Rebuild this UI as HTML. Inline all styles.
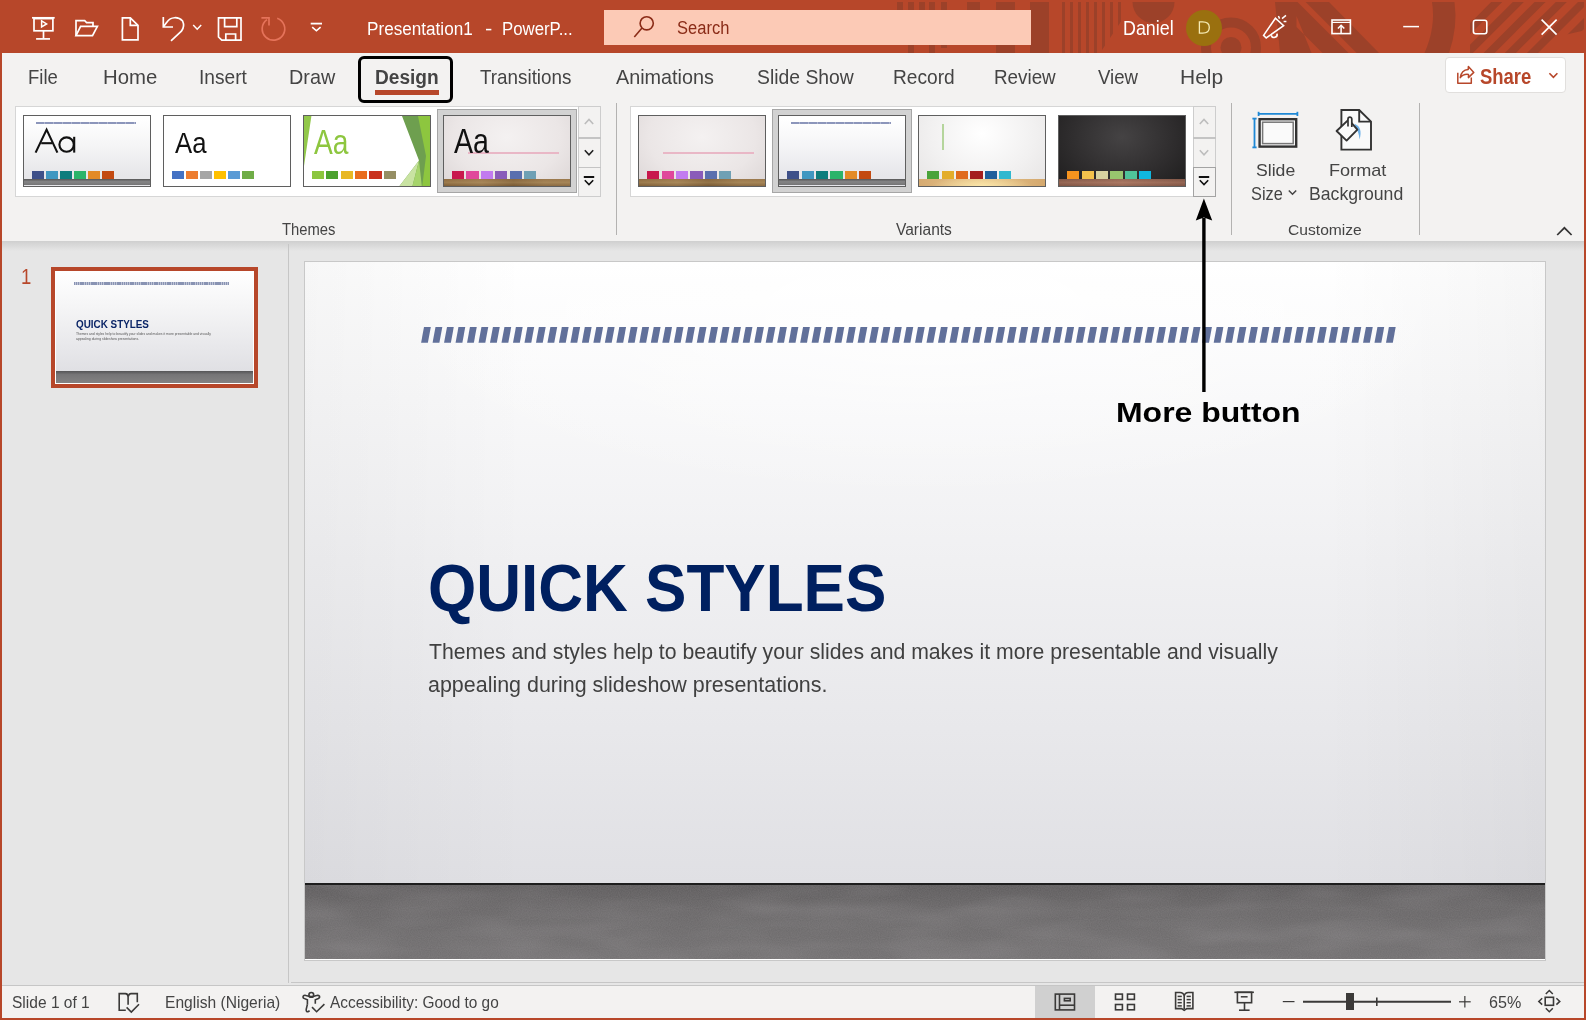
<!DOCTYPE html><html><head><meta charset="utf-8"><style>
*{margin:0;padding:0;box-sizing:border-box}
html,body{width:1586px;height:1020px;overflow:hidden;background:#B7472A;font-family:"Liberation Sans",sans-serif;position:relative}
.a{position:absolute}
.t{position:absolute;white-space:nowrap;transform-origin:0 0}
svg{position:absolute;overflow:visible}
</style></head><body>
<svg class="a" style="left:0;top:0" width="1586" height="53" viewBox="0 0 1586 53">
<defs><clipPath id="tbc"><rect x="0" y="2" width="1584" height="51"/></clipPath></defs><g clip-path="url(#tbc)" fill="#9C4129">
<rect x="897" y="2" width="6" height="8"/>
<rect x="908" y="2" width="6" height="8"/>
<rect x="908" y="45" width="6" height="8"/>
<rect x="919" y="2" width="6" height="8"/>
<rect x="929" y="2" width="6" height="8"/>
<rect x="929" y="45" width="6" height="8"/>
<rect x="941" y="2" width="6" height="8"/>
<rect x="941" y="45" width="6" height="3"/>
<rect x="967" y="2" width="13" height="8"/>
<rect x="996" y="2" width="19" height="8"/>
<rect x="996" y="45" width="19" height="8"/>
<rect x="1030" y="2" width="19" height="51"/>
<clipPath id="thin"><polygon points="1055,2 1122,2 1122,20 1100,53 1055,53"/></clipPath><g clip-path="url(#thin)">
<rect x="1062" y="2" width="3" height="51"/>
<rect x="1070" y="2" width="3" height="51"/>
<rect x="1078" y="2" width="3" height="51"/>
<rect x="1086" y="2" width="3" height="51"/>
<rect x="1094" y="2" width="3" height="51"/>
<rect x="1102" y="2" width="3" height="51"/>
<rect x="1110" y="2" width="3" height="51"/>
<rect x="1118" y="2" width="3" height="51"/>
</g>
<circle cx="1153.5" cy="2" r="21"/>
<circle cx="1231" cy="47.5" r="25" fill="none" stroke="#9C4129" stroke-width="10"/>
<circle cx="1231" cy="47.5" r="10.5"/>
<polygon points="1275,2 1329,2 1379,53 1280,53"/>
<g fill="#B7472A"><polygon points="1297.5,2 1305.6,2 1356.6,53 1348.5,53"/><polygon points="1296.5,16 1296.5,27 1322.5,53 1311.5,53"/></g>
<path d="M1432,2 L1454.5,2 Q1458,27 1449,53 L1424.5,53 Q1436,27 1432,2 Z"/>
<clipPath id="rs"><polygon points="1470,2 1586,2 1586,30 1560,36 1545,53 1470,53"/></clipPath><g clip-path="url(#rs)">
<polygon points="1491.2,2 1502.2,2 1451.2,53 1440.2,53"/>
<polygon points="1512.8,2 1523.8,2 1472.8,53 1461.8,53"/>
<polygon points="1534.6,2 1545.6,2 1494.6,53 1483.6,53"/>
<polygon points="1555.8,2 1566.8,2 1515.8,53 1504.8,53"/>
<polygon points="1578.0,2 1589.0,2 1538.0,53 1527.0,53"/>
<polygon points="1600.0,2 1611.0,2 1560.0,53 1549.0,53"/>
</g>
</g></svg>
<div class="a" style="left:604px;top:10px;width:427px;height:35px;background:#FCCAB6"></div>
<svg style="left:0;top:0" width="1586" height="53"><circle cx="646.7" cy="23.3" r="6.6" fill="none" stroke="#8A2B17" stroke-width="1.6"/><line x1="642" y1="28" x2="634.3" y2="36.9" stroke="#8A2B17" stroke-width="1.6"/></svg>
<div class="t" style="left:677.16px;top:18.00px;font-size:19.19px;line-height:19.19px;font-weight:normal;color:#8A2B17;transform:scaleX(0.8606);">Search</div>
<div class="t" style="left:367.10px;top:21.00px;font-size:17.95px;line-height:17.95px;font-weight:normal;color:#fff;transform:scaleX(0.9555);">Presentation1</div>
<div class="t" style="left:484.64px;top:21.00px;font-size:17.95px;line-height:17.95px;font-weight:normal;color:#fff;transform:scaleX(1.2179);">-</div>
<div class="t" style="left:502.08px;top:21.00px;font-size:17.95px;line-height:17.95px;font-weight:normal;color:#fff;transform:scaleX(0.9367);">PowerP...</div>
<div class="t" style="left:1122.62px;top:19.00px;font-size:19.48px;line-height:19.48px;font-weight:normal;color:#fff;transform:scaleX(0.9184);">Daniel</div>
<div class="a" style="left:1186px;top:9.5px;width:36px;height:36px;border-radius:50%;background:#9A700F"></div>
<svg style="left:0;top:0" width="1" height="1"><path d="M1199.4,21.9 H1202.6 Q1209.3,21.9 1209.3,27.6 Q1209.3,33.2 1202.6,33.2 H1199.4 Z" fill="none" stroke="#F6EBB5" stroke-width="1.3"/></svg>
<svg style="left:0;top:0" width="1586" height="60" fill="none" stroke="#fff" stroke-width="1.7" stroke-linejoin="miter"><line x1="32" y1="17.8" x2="54.7" y2="17.8"/><rect x="34" y="18.6" width="18.9" height="12.2"/><polygon points="41.6,20.9 41.6,27 46.6,23.95" stroke-width="1.5"/><line x1="43.5" y1="30.8" x2="43.5" y2="38.6"/><line x1="36.1" y1="38.9" x2="50" y2="38.9"/><path d="M76,36 V20.7 H84.7 L86.6,22.6 H93 V26.4"/><path d="M76,35.6 L80.6,26.4 H97.4 L92.5,35.6 Z"/><path d="M122.4,17.8 H130.3 L138,25.4 V39.8 H122.4 Z"/><path d="M130.3,17.8 V25.4 H138"/><path d="M163.3,17 V27 H173"/><path d="M163.6,26.6 L167,22 A10,10 0 0 1 182.6,21 A10,10 0 0 1 181.4,31.2 L171,40.8"/><polyline points="193.2,25 197.2,29.2 201.2,25" stroke-width="1.5"/><path d="M218.5,17.8 H241 V40.2 H221.8 L218.5,37 Z"/><path d="M224.6,17.8 V26.6 H236.8 V17.8"/><path d="M225.8,40.2 V34 H235.6 V40.2"/><g stroke="#E5735A"><path d="M277.2,18.2 A11.3,11.3 0 1 1 267,19.6"/><polyline points="261.4,17.8 269,17.8 269,25.6"/></g><line x1="310.7" y1="23.6" x2="322" y2="23.6" stroke-width="1.8"/><polyline points="312.2,27.2 316.4,30.8 320.6,27.2" stroke-width="1.6"/><path d="M1263.6,35.4 L1275.4,18.2 L1283.6,25.6 L1266.2,38 Z" stroke-width="1.6"/><path d="M1271.2,35.2 A3,3 0 0 0 1277,33.6" stroke-width="1.6"/><line x1="1278.4" y1="16" x2="1279.6" y2="18.6" stroke-width="1.5"/><line x1="1282" y1="18.6" x2="1286" y2="15.4" stroke-width="1.5"/><line x1="1283.6" y1="21.5" x2="1286.4" y2="21.5" stroke-width="1.5"/><rect x="1332" y="20" width="18.4" height="13.6" stroke-width="1.6"/><line x1="1332" y1="22.4" x2="1350.4" y2="22.4" stroke-width="1.2"/><line x1="1341.1" y1="25.4" x2="1341.1" y2="33.4" stroke-width="1.5"/><polyline points="1337.9,28.6 1341.1,25.3 1344.3,28.6" stroke-width="1.5"/><line x1="1403.2" y1="26.6" x2="1419" y2="26.6" stroke-width="1.5"/><rect x="1473.4" y="20.2" width="13.4" height="13.6" rx="2.2" stroke-width="1.6"/><line x1="1541.6" y1="19.6" x2="1556.6" y2="34.6" stroke-width="1.6"/><line x1="1556.6" y1="19.6" x2="1541.6" y2="34.6" stroke-width="1.6"/></svg>
<div class="a" style="left:2px;top:53px;width:1582px;height:188px;background:#F3F2F1"></div>
<div class="a" style="left:2px;top:241px;width:1582px;height:745px;background:#E6E6E6"></div>
<div class="a" style="left:2px;top:241px;width:1582px;height:10px;background:linear-gradient(#CFCFCF,#E6E6E6)"></div>
<div class="a" style="left:2px;top:986px;width:1582px;height:32px;background:#F3F2F1"></div>
<div class="t" style="left:27.60px;top:67.00px;font-size:20.49px;line-height:20.49px;font-weight:normal;color:#444;transform:scaleX(0.9034);">File</div>
<div class="t" style="left:102.76px;top:67.00px;font-size:20.49px;line-height:20.49px;font-weight:normal;color:#444;transform:scaleX(0.9922);">Home</div>
<div class="t" style="left:199.20px;top:67.00px;font-size:20.49px;line-height:20.49px;font-weight:normal;color:#444;transform:scaleX(0.9332);">Insert</div>
<div class="t" style="left:289.20px;top:67.00px;font-size:20.49px;line-height:20.49px;font-weight:normal;color:#444;transform:scaleX(0.9661);">Draw</div>
<div class="t" style="left:480.00px;top:67.00px;font-size:20.49px;line-height:20.49px;font-weight:normal;color:#444;transform:scaleX(0.9194);">Transitions</div>
<div class="t" style="left:616.00px;top:67.00px;font-size:20.49px;line-height:20.49px;font-weight:normal;color:#444;transform:scaleX(0.9664);">Animations</div>
<div class="t" style="left:757.08px;top:67.00px;font-size:20.49px;line-height:20.49px;font-weight:normal;color:#444;transform:scaleX(0.9441);">Slide Show</div>
<div class="t" style="left:893.18px;top:67.00px;font-size:20.49px;line-height:20.49px;font-weight:normal;color:#444;transform:scaleX(0.9340);">Record</div>
<div class="t" style="left:994.22px;top:67.00px;font-size:20.49px;line-height:20.49px;font-weight:normal;color:#444;transform:scaleX(0.9187);">Review</div>
<div class="t" style="left:1098.04px;top:67.00px;font-size:20.49px;line-height:20.49px;font-weight:normal;color:#444;transform:scaleX(0.9081);">View</div>
<div class="t" style="left:1179.70px;top:67.00px;font-size:20.49px;line-height:20.49px;font-weight:normal;color:#444;transform:scaleX(1.0235);">Help</div>
<div class="t" style="left:375.10px;top:67.00px;font-size:20.49px;line-height:20.49px;font-weight:bold;color:#444;transform:scaleX(0.9330);">Design</div>
<div class="a" style="left:358px;top:55.5px;width:95px;height:47px;border:3.6px solid #000;border-radius:6px"></div>
<div class="a" style="left:375px;top:90px;width:64px;height:5px;background:#B7472A"></div>
<div class="a" style="left:1445px;top:57px;width:121px;height:36px;background:#fff;border:1px solid #E1DFDD;border-radius:4px"></div>
<div class="t" style="left:1480.14px;top:66.00px;font-size:21.80px;line-height:21.80px;font-weight:bold;color:#B7472A;transform:scaleX(0.8468);">Share</div>
<div class="t" style="left:282.48px;top:221.00px;font-size:17.15px;line-height:17.15px;font-weight:normal;color:#444;transform:scaleX(0.8630);">Themes</div>
<div class="t" style="left:896.00px;top:221.00px;font-size:17.30px;line-height:17.30px;font-weight:normal;color:#444;transform:scaleX(0.9000);">Variants</div>
<div class="t" style="left:1288.16px;top:223.00px;font-size:14.83px;line-height:14.83px;font-weight:normal;color:#444;transform:scaleX(1.0537);">Customize</div>
<div class="a" style="left:616px;top:103px;width:1px;height:132px;background:#B3B2B1"></div>
<div class="a" style="left:1231px;top:103px;width:1px;height:132px;background:#B3B2B1"></div>
<div class="a" style="left:1419px;top:103px;width:1px;height:132px;background:#B3B2B1"></div>
<div class="t" style="left:1256.08px;top:162.00px;font-size:17.30px;line-height:17.30px;font-weight:normal;color:#444;transform:scaleX(1.0204);">Slide</div>
<div class="t" style="left:1251.10px;top:185.00px;font-size:18.17px;line-height:18.17px;font-weight:normal;color:#444;transform:scaleX(0.8998);">Size</div>
<div class="t" style="left:1328.56px;top:163.00px;font-size:16.57px;line-height:16.57px;font-weight:normal;color:#444;transform:scaleX(1.0927);">Format</div>
<div class="t" style="left:1309.14px;top:184.00px;font-size:19.04px;line-height:19.04px;font-weight:normal;color:#444;transform:scaleX(0.9280);">Background</div>
<svg style="left:0;top:0" width="1586" height="1020" fill="none"><g stroke="#B7472A" stroke-width="1.5" stroke-linejoin="round"><path d="M1457.8,72.8 V83.3 H1471.3 V77.4"/><path d="M1460.3,77.6 C1461,72.5 1464,69.6 1468.2,69.4 L1468.4,66.6 L1473.8,72.4 L1468.4,77.6 L1468.5,74.4 C1465,74 1462.2,75 1460.3,77.6 Z"/></g><polyline points="1549.4,73.2 1553.4,77.4 1557.4,73.2" stroke="#B7472A" stroke-width="1.6"/><g stroke="#1E88D5" stroke-width="1.8"><line x1="1254.5" y1="118.6" x2="1254.5" y2="147.4"/><line x1="1252.4" y1="118.6" x2="1256.6" y2="118.6"/><line x1="1252.4" y1="147.4" x2="1256.6" y2="147.4"/><line x1="1258.6" y1="113.9" x2="1297.4" y2="113.9"/><line x1="1258.6" y1="111.8" x2="1258.6" y2="116"/><line x1="1297.4" y1="111.8" x2="1297.4" y2="116"/></g><rect x="1259.6" y="119.2" width="36.6" height="27.4" fill="#FAFAFA" stroke="#333" stroke-width="2.4"/><rect x="1262.6" y="122.2" width="30.6" height="21.4" fill="none" stroke="#777" stroke-width="1.5"/><path d="M1341.4,110 H1359.2 L1371,121.6 V149.6 H1341.4 Z" fill="#FAFAFA" stroke="#333" stroke-width="1.9"/><path d="M1359.2,110 V121.6 H1371" stroke="#333" stroke-width="1.9"/><path d="M1355,124 C1360,126 1362,131 1359.6,139.6 C1359,133 1357,128 1353.4,126 Z" fill="#6FB1E8"/><path d="M1336.6,131 L1348.6,119.6 L1357.4,129.6 L1346.6,140.6 Z" fill="#FAFAFA" stroke="#333" stroke-width="1.9" stroke-linejoin="round"/><path d="M1348,126.6 V119 A1.9,1.9 0 0 1 1351.8,119 V127" stroke="#333" stroke-width="1.7" fill="#FAFAFA"/><polyline points="1288.8,190.4 1292.5,194.2 1296.2,190.4" stroke="#444" stroke-width="1.5"/><polyline points="1557.2,235 1564.4,227.8 1571.6,235" stroke="#333" stroke-width="1.7"/></svg>
<div class="a" style="left:15px;top:106px;width:564px;height:91px;background:#fff;border:1px solid #D6D6D6;border-right:none"></div><div class="a" style="left:437.0px;top:109px;width:140px;height:84px;background:#D2D2D2;border:1px solid #A6A6A6"></div><div class="a" style="left:23.0px;top:115px;width:128px;height:72px;border:1px solid #5F5F5F;background:linear-gradient(#ffffff 5%,#f4f4f5 45%,#e6e6e9 85%);overflow:hidden"><div class="a" style="left:11.7px;top:5.7px;width:100.8px;height:2.2px;background:repeating-linear-gradient(90deg,rgba(112,124,170,.8) 0 8px,rgba(112,124,170,.55) 8px 9px)"></div><div class="a" style="left:0;bottom:1px;width:100%;height:6px;background:linear-gradient(#555556,#858586 45%,#747475)"></div></div><svg style="left:0;top:0" width="1" height="1" fill="none" stroke="#111" stroke-width="2.1"><polyline points="35.6,152.6 46.6,129.6 57.4,152.6"/><line x1="41.2" y1="143.2" x2="52" y2="143.2"/><circle cx="66.6" cy="144.6" r="7.2"/><line x1="74.2" y1="136.8" x2="74.2" y2="152.6"/></svg><div class="a" style="left:32.10px;top:171.2px;width:11.9px;height:7.6px;background:#3E5089"></div><div class="a" style="left:46.10px;top:171.2px;width:11.9px;height:7.6px;background:#4097C1"></div><div class="a" style="left:60.10px;top:171.2px;width:11.9px;height:7.6px;background:#0E7D7D"></div><div class="a" style="left:74.10px;top:171.2px;width:11.9px;height:7.6px;background:#2BB46A"></div><div class="a" style="left:88.10px;top:171.2px;width:11.9px;height:7.6px;background:#E38A26"></div><div class="a" style="left:102.10px;top:171.2px;width:11.9px;height:7.6px;background:#C34A12"></div><div class="a" style="left:163.0px;top:115px;width:128px;height:72px;border:1px solid #5F5F5F;background:#fff;overflow:hidden"></div><div class="t" style="left:174.50px;top:127.00px;font-size:30.38px;line-height:30.38px;font-weight:normal;color:#111;transform:scaleX(0.8466);">Aa</div><div class="a" style="left:172.00px;top:171.2px;width:12.0px;height:7.6px;background:#4472C4"></div><div class="a" style="left:186.00px;top:171.2px;width:12.0px;height:7.6px;background:#ED7D31"></div><div class="a" style="left:200.00px;top:171.2px;width:12.0px;height:7.6px;background:#A5A5A5"></div><div class="a" style="left:214.00px;top:171.2px;width:12.0px;height:7.6px;background:#FFC000"></div><div class="a" style="left:228.00px;top:171.2px;width:12.0px;height:7.6px;background:#5B9BD5"></div><div class="a" style="left:242.00px;top:171.2px;width:12.0px;height:7.6px;background:#70AD47"></div><div class="a" style="left:303.0px;top:115px;width:128px;height:72px;border:1px solid #5F5F5F;background:#fff;overflow:hidden"><svg style="left:0;top:0" width="128" height="72"><polygon points="0,0 7.4,0 0,50" fill="#92C84A"/><polygon points="98,0 128,0 128,72 94,72 115,44.5" fill="#6E9F4F"/><polygon points="114,0 128,0 128,72 118,72 122,40" fill="#8DC63F"/><polygon points="115,44.5 94,72 108,72" fill="#C9E3A2"/><polygon points="108,72 115,44.5 118,72" fill="#A6D46B"/></svg></div><div class="t" style="left:314.02px;top:124.00px;font-size:35.17px;line-height:35.17px;font-weight:normal;color:#8DC63F;transform:scaleX(0.8019);">Aa</div><div class="a" style="left:311.80px;top:171.2px;width:12.3px;height:7.6px;background:#8CC63F"></div><div class="a" style="left:326.20px;top:171.2px;width:12.3px;height:7.6px;background:#4CA22F"></div><div class="a" style="left:340.60px;top:171.2px;width:12.3px;height:7.6px;background:#E8B823"></div><div class="a" style="left:355.00px;top:171.2px;width:12.3px;height:7.6px;background:#E96C1D"></div><div class="a" style="left:369.40px;top:171.2px;width:12.3px;height:7.6px;background:#C9321F"></div><div class="a" style="left:383.80px;top:171.2px;width:12.3px;height:7.6px;background:#958E63"></div><div class="a" style="left:443.0px;top:115px;width:128px;height:72px;border:1px solid #5F5F5F;background:radial-gradient(ellipse at 50% 30%,#f4f1f1,#ebe6e6 60%,#dcd6d6);overflow:hidden"><div class="a" style="left:24px;top:36.2px;width:91px;height:1.6px;background:#E9B7C6"></div><div class="a" style="left:0;bottom:0px;width:100%;height:7px;background:linear-gradient(90deg,rgba(255,255,255,0) 0,rgba(255,230,180,.12) 30%,rgba(0,0,0,.06) 55%,rgba(255,230,180,.1) 80%),linear-gradient(#8f6c40,#9b7a4c 50%,#7f5e36)"></div></div><div class="t" style="left:454.04px;top:124.00px;font-size:34.30px;line-height:34.30px;font-weight:normal;color:#111;transform:scaleX(0.8337);">Aa</div><div class="a" style="left:452.00px;top:171.2px;width:12.3px;height:7.6px;background:#C8194D"></div><div class="a" style="left:466.40px;top:171.2px;width:12.3px;height:7.6px;background:#E0479B"></div><div class="a" style="left:480.80px;top:171.2px;width:12.3px;height:7.6px;background:#C27BEF"></div><div class="a" style="left:495.20px;top:171.2px;width:12.3px;height:7.6px;background:#8A5BB9"></div><div class="a" style="left:509.60px;top:171.2px;width:12.3px;height:7.6px;background:#5A6FAE"></div><div class="a" style="left:524.00px;top:171.2px;width:12.3px;height:7.6px;background:#6FA0B4"></div><div class="a" style="left:578.0px;top:106px;width:23px;height:91px;background:#F3F2F1;border:1px solid #CDCDCD"></div><div class="a" style="left:578.0px;top:137px;width:23px;height:1.5px;background:#C4C4C4"></div><div class="a" style="left:578.0px;top:166.5px;width:23px;height:1.5px;background:#C4C4C4"></div><svg style="left:0;top:0" width="1" height="1"><polyline points="584.8,124 589.0,119.5 593.2,124" fill="none" stroke="#BDBDBD" stroke-width="1.6"/><polyline points="584.8,150.3 589.0,154.8 593.2,150.3" fill="none" stroke="#222" stroke-width="1.6"/><line x1="583.8" y1="177" x2="594.2" y2="177" stroke="#111" stroke-width="2"/><polyline points="584.8,180.3 589.0,184.6 593.2,180.3" fill="none" stroke="#111" stroke-width="1.6"/></svg><div class="a" style="left:630px;top:106px;width:564px;height:91px;background:#fff;border:1px solid #D6D6D6;border-right:none"></div><div class="a" style="left:772.0px;top:109px;width:140px;height:84px;background:#D2D2D2;border:1px solid #A6A6A6"></div><div class="a" style="left:638.0px;top:115px;width:128px;height:72px;border:1px solid #5F5F5F;background:radial-gradient(ellipse at 50% 30%,#f4f1f1,#ebe6e6 60%,#dcd6d6);overflow:hidden"><div class="a" style="left:24px;top:36.2px;width:91px;height:1.6px;background:#E9B7C6"></div><div class="a" style="left:0;bottom:0px;width:100%;height:7px;background:linear-gradient(90deg,rgba(255,255,255,0) 0,rgba(255,230,180,.12) 30%,rgba(0,0,0,.06) 55%,rgba(255,230,180,.1) 80%),linear-gradient(#8f6c40,#9b7a4c 50%,#7f5e36)"></div></div><div class="a" style="left:647.10px;top:171.2px;width:12.3px;height:7.6px;background:#C8194D"></div><div class="a" style="left:661.50px;top:171.2px;width:12.3px;height:7.6px;background:#E0479B"></div><div class="a" style="left:675.90px;top:171.2px;width:12.3px;height:7.6px;background:#C27BEF"></div><div class="a" style="left:690.30px;top:171.2px;width:12.3px;height:7.6px;background:#8A5BB9"></div><div class="a" style="left:704.70px;top:171.2px;width:12.3px;height:7.6px;background:#5A6FAE"></div><div class="a" style="left:719.10px;top:171.2px;width:12.3px;height:7.6px;background:#6FA0B4"></div><div class="a" style="left:778.0px;top:115px;width:128px;height:72px;border:1px solid #5F5F5F;background:linear-gradient(#ffffff 5%,#f4f4f6 45%,#e6e6ea 85%);overflow:hidden"><div class="a" style="left:11.7px;top:5.7px;width:100.8px;height:2.2px;background:repeating-linear-gradient(90deg,rgba(112,124,170,.8) 0 8px,rgba(112,124,170,.55) 8px 9px)"></div><div class="a" style="left:0;bottom:1px;width:100%;height:6px;background:linear-gradient(#555556,#858586 45%,#747475)"></div></div><div class="a" style="left:787.20px;top:171.2px;width:12.3px;height:7.6px;background:#3E5089"></div><div class="a" style="left:801.60px;top:171.2px;width:12.3px;height:7.6px;background:#4097C1"></div><div class="a" style="left:816.00px;top:171.2px;width:12.3px;height:7.6px;background:#0E7D7D"></div><div class="a" style="left:830.40px;top:171.2px;width:12.3px;height:7.6px;background:#2BB46A"></div><div class="a" style="left:844.80px;top:171.2px;width:12.3px;height:7.6px;background:#E38A26"></div><div class="a" style="left:859.20px;top:171.2px;width:12.3px;height:7.6px;background:#C34A12"></div><div class="a" style="left:918.0px;top:115px;width:128px;height:72px;border:1px solid #5F5F5F;background:radial-gradient(ellipse at 50% 25%,#ffffff,#f1f0f0 60%,#e6e4e4);overflow:hidden"><div class="a" style="left:23.2px;top:7.6px;width:1.6px;height:26.4px;background:#B5D59C"></div><div class="a" style="left:0;bottom:0px;width:100%;height:7px;background:radial-gradient(ellipse 40% 140% at 50% 100%,#fbe6a8,rgba(250,225,160,0) 100%),linear-gradient(90deg,#d6ab72,#e6c58d 50%,#d4a86e)"></div></div><div class="a" style="left:927.10px;top:171.2px;width:12.3px;height:7.6px;background:#4AA33B"></div><div class="a" style="left:941.50px;top:171.2px;width:12.3px;height:7.6px;background:#E3AD2C"></div><div class="a" style="left:955.90px;top:171.2px;width:12.3px;height:7.6px;background:#E06B1D"></div><div class="a" style="left:970.30px;top:171.2px;width:12.3px;height:7.6px;background:#A51E1E"></div><div class="a" style="left:984.70px;top:171.2px;width:12.3px;height:7.6px;background:#1F5F9C"></div><div class="a" style="left:999.10px;top:171.2px;width:12.3px;height:7.6px;background:#30B8CF"></div><div class="a" style="left:1058.0px;top:115px;width:128px;height:72px;border:1px solid #5F5F5F;background:radial-gradient(ellipse at 50% 30%,#454344,#2e2c2d 60%,#1e1d1d);overflow:hidden"><div class="a" style="left:0;bottom:0px;width:100%;height:7px;background:linear-gradient(90deg,rgba(0,0,0,.08),rgba(255,200,170,.1) 50%,rgba(0,0,0,.08)),linear-gradient(#8c5e4d,#a06e5a 50%,#8a5b4a)"></div></div><div class="a" style="left:1067.10px;top:171.2px;width:12.3px;height:7.6px;background:#F7931E"></div><div class="a" style="left:1081.50px;top:171.2px;width:12.3px;height:7.6px;background:#F5C24C"></div><div class="a" style="left:1095.90px;top:171.2px;width:12.3px;height:7.6px;background:#D8D2A0"></div><div class="a" style="left:1110.30px;top:171.2px;width:12.3px;height:7.6px;background:#98C56E"></div><div class="a" style="left:1124.70px;top:171.2px;width:12.3px;height:7.6px;background:#4FC39A"></div><div class="a" style="left:1139.10px;top:171.2px;width:12.3px;height:7.6px;background:#10B7E0"></div><div class="a" style="left:1193.0px;top:106px;width:23px;height:91px;background:#F3F2F1;border:1px solid #CDCDCD"></div><div class="a" style="left:1193.0px;top:137px;width:23px;height:1.5px;background:#C4C4C4"></div><div class="a" style="left:1193.0px;top:166.5px;width:23px;height:1.5px;background:#C4C4C4"></div><svg style="left:0;top:0" width="1" height="1"><polyline points="1199.8,124 1204.0,119.5 1208.2,124" fill="none" stroke="#BDBDBD" stroke-width="1.6"/><polyline points="1199.8,150.3 1204.0,154.8 1208.2,150.3" fill="none" stroke="#BDBDBD" stroke-width="1.6"/><line x1="1198.8" y1="177" x2="1209.2" y2="177" stroke="#111" stroke-width="2"/><polyline points="1199.8,180.3 1204.0,184.6 1208.2,180.3" fill="none" stroke="#111" stroke-width="1.6"/></svg><div class="a" style="left:1193.4px;top:166.6px;width:22.6px;height:30.2px;border:1.3px solid #A3A3A3"></div>
<div class="a" style="left:288px;top:244px;width:1px;height:739px;background:#C6C6C6"></div>
<div class="a" style="left:291px;top:982px;width:1293px;height:1px;background:#C6C6C6"></div>
<div class="a" style="left:2px;top:985px;width:1582px;height:1px;background:#C6C6C6"></div>
<div class="a" style="left:304px;top:261px;width:1242px;height:700px;border:1px solid #C8C8C8;background:#fff"></div>
<div class="a" style="left:305px;top:262px;width:1240px;height:622px;background:linear-gradient(#FFFFFF 0%,#F8F8F9 22%,#F0F0F2 48%,#E8E8EB 75%,#E0E0E4 100%)"></div>
<div class="a" style="left:305px;top:262px;width:1240px;height:622px;background:radial-gradient(ellipse 45% 30% at 50% 8%,rgba(255,255,255,.7),rgba(255,255,255,0)),linear-gradient(90deg,rgba(0,0,0,.03),rgba(0,0,0,0) 18%,rgba(0,0,0,0) 82%,rgba(0,0,0,.03))"></div>
<div class="a" style="left:305px;top:884px;width:1240px;height:75px;background:linear-gradient(#5B595A,#676566 35%,#706E6F)"></div>
<svg style="left:305px;top:884px;overflow:hidden" width="1240" height="75"><filter id="nz" x="0" y="0" width="1240" height="75" filterUnits="userSpaceOnUse"><feTurbulence type="fractalNoise" baseFrequency="0.012 0.05" numOctaves="2" seed="7"/><feColorMatrix values="0 0 0 0 0.55  0 0 0 0 0.53  0 0 0 0 0.55  0 0 0 1.4 -0.5"/></filter><rect width="1240" height="75" filter="url(#nz)" opacity="0.18"/><filter id="nz2" x="0" y="0" width="1240" height="75" filterUnits="userSpaceOnUse"><feTurbulence type="fractalNoise" baseFrequency="0.9" numOctaves="1" seed="3"/><feColorMatrix values="0 0 0 0 0.45  0 0 0 0 0.42  0 0 0 0 0.43  0 0 0 0.6 0"/></filter><rect width="1240" height="75" filter="url(#nz2)" opacity="0.4"/></svg>
<div class="a" style="left:305px;top:883.3px;width:1240px;height:1.6px;background:#1E1E1E"></div>
<svg style="left:0;top:0" width="1586" height="1020"><polygon fill="#61709A" points="421.10,342.7 424.00,327.1 430.80,327.1 427.90,342.7"/><polygon fill="#61709A" points="432.59,342.7 435.49,327.1 442.29,327.1 439.39,342.7"/><polygon fill="#61709A" points="444.07,342.7 446.97,327.1 453.77,327.1 450.87,342.7"/><polygon fill="#61709A" points="455.56,342.7 458.46,327.1 465.26,327.1 462.36,342.7"/><polygon fill="#61709A" points="467.05,342.7 469.95,327.1 476.75,327.1 473.85,342.7"/><polygon fill="#61709A" points="478.53,342.7 481.43,327.1 488.23,327.1 485.33,342.7"/><polygon fill="#61709A" points="490.02,342.7 492.92,327.1 499.72,327.1 496.82,342.7"/><polygon fill="#61709A" points="501.51,342.7 504.41,327.1 511.21,327.1 508.31,342.7"/><polygon fill="#61709A" points="513.00,342.7 515.90,327.1 522.70,327.1 519.80,342.7"/><polygon fill="#61709A" points="524.48,342.7 527.38,327.1 534.18,327.1 531.28,342.7"/><polygon fill="#61709A" points="535.97,342.7 538.87,327.1 545.67,327.1 542.77,342.7"/><polygon fill="#61709A" points="547.46,342.7 550.36,327.1 557.16,327.1 554.26,342.7"/><polygon fill="#61709A" points="558.94,342.7 561.84,327.1 568.64,327.1 565.74,342.7"/><polygon fill="#61709A" points="570.43,342.7 573.33,327.1 580.13,327.1 577.23,342.7"/><polygon fill="#61709A" points="581.92,342.7 584.82,327.1 591.62,327.1 588.72,342.7"/><polygon fill="#61709A" points="593.40,342.7 596.30,327.1 603.10,327.1 600.20,342.7"/><polygon fill="#61709A" points="604.89,342.7 607.79,327.1 614.59,327.1 611.69,342.7"/><polygon fill="#61709A" points="616.38,342.7 619.28,327.1 626.08,327.1 623.18,342.7"/><polygon fill="#61709A" points="627.86,342.7 630.76,327.1 637.56,327.1 634.66,342.7"/><polygon fill="#61709A" points="639.35,342.7 642.25,327.1 649.05,327.1 646.15,342.7"/><polygon fill="#61709A" points="650.84,342.7 653.74,327.1 660.54,327.1 657.64,342.7"/><polygon fill="#61709A" points="662.33,342.7 665.23,327.1 672.03,327.1 669.12,342.7"/><polygon fill="#61709A" points="673.81,342.7 676.71,327.1 683.51,327.1 680.61,342.7"/><polygon fill="#61709A" points="685.30,342.7 688.20,327.1 695.00,327.1 692.10,342.7"/><polygon fill="#61709A" points="696.79,342.7 699.69,327.1 706.49,327.1 703.59,342.7"/><polygon fill="#61709A" points="708.27,342.7 711.17,327.1 717.97,327.1 715.07,342.7"/><polygon fill="#61709A" points="719.76,342.7 722.66,327.1 729.46,327.1 726.56,342.7"/><polygon fill="#61709A" points="731.25,342.7 734.15,327.1 740.95,327.1 738.05,342.7"/><polygon fill="#61709A" points="742.73,342.7 745.63,327.1 752.43,327.1 749.53,342.7"/><polygon fill="#61709A" points="754.22,342.7 757.12,327.1 763.92,327.1 761.02,342.7"/><polygon fill="#61709A" points="765.71,342.7 768.61,327.1 775.41,327.1 772.51,342.7"/><polygon fill="#61709A" points="777.19,342.7 780.09,327.1 786.89,327.1 783.99,342.7"/><polygon fill="#61709A" points="788.68,342.7 791.58,327.1 798.38,327.1 795.48,342.7"/><polygon fill="#61709A" points="800.17,342.7 803.07,327.1 809.87,327.1 806.97,342.7"/><polygon fill="#61709A" points="811.65,342.7 814.55,327.1 821.35,327.1 818.45,342.7"/><polygon fill="#61709A" points="823.14,342.7 826.04,327.1 832.84,327.1 829.94,342.7"/><polygon fill="#61709A" points="834.63,342.7 837.53,327.1 844.33,327.1 841.43,342.7"/><polygon fill="#61709A" points="846.12,342.7 849.02,327.1 855.82,327.1 852.92,342.7"/><polygon fill="#61709A" points="857.60,342.7 860.50,327.1 867.30,327.1 864.40,342.7"/><polygon fill="#61709A" points="869.09,342.7 871.99,327.1 878.79,327.1 875.89,342.7"/><polygon fill="#61709A" points="880.58,342.7 883.48,327.1 890.28,327.1 887.38,342.7"/><polygon fill="#61709A" points="892.06,342.7 894.96,327.1 901.76,327.1 898.86,342.7"/><polygon fill="#61709A" points="903.55,342.7 906.45,327.1 913.25,327.1 910.35,342.7"/><polygon fill="#61709A" points="915.04,342.7 917.94,327.1 924.74,327.1 921.84,342.7"/><polygon fill="#61709A" points="926.52,342.7 929.42,327.1 936.22,327.1 933.32,342.7"/><polygon fill="#61709A" points="938.01,342.7 940.91,327.1 947.71,327.1 944.81,342.7"/><polygon fill="#61709A" points="949.50,342.7 952.40,327.1 959.20,327.1 956.30,342.7"/><polygon fill="#61709A" points="960.98,342.7 963.88,327.1 970.68,327.1 967.78,342.7"/><polygon fill="#61709A" points="972.47,342.7 975.37,327.1 982.17,327.1 979.27,342.7"/><polygon fill="#61709A" points="983.96,342.7 986.86,327.1 993.66,327.1 990.76,342.7"/><polygon fill="#61709A" points="995.45,342.7 998.35,327.1 1005.15,327.1 1002.25,342.7"/><polygon fill="#61709A" points="1006.93,342.7 1009.83,327.1 1016.63,327.1 1013.73,342.7"/><polygon fill="#61709A" points="1018.42,342.7 1021.32,327.1 1028.12,327.1 1025.22,342.7"/><polygon fill="#61709A" points="1029.91,342.7 1032.81,327.1 1039.61,327.1 1036.71,342.7"/><polygon fill="#61709A" points="1041.39,342.7 1044.29,327.1 1051.09,327.1 1048.19,342.7"/><polygon fill="#61709A" points="1052.88,342.7 1055.78,327.1 1062.58,327.1 1059.68,342.7"/><polygon fill="#61709A" points="1064.37,342.7 1067.27,327.1 1074.07,327.1 1071.17,342.7"/><polygon fill="#61709A" points="1075.85,342.7 1078.75,327.1 1085.55,327.1 1082.65,342.7"/><polygon fill="#61709A" points="1087.34,342.7 1090.24,327.1 1097.04,327.1 1094.14,342.7"/><polygon fill="#61709A" points="1098.83,342.7 1101.73,327.1 1108.53,327.1 1105.63,342.7"/><polygon fill="#61709A" points="1110.31,342.7 1113.21,327.1 1120.01,327.1 1117.11,342.7"/><polygon fill="#61709A" points="1121.80,342.7 1124.70,327.1 1131.50,327.1 1128.60,342.7"/><polygon fill="#61709A" points="1133.29,342.7 1136.19,327.1 1142.99,327.1 1140.09,342.7"/><polygon fill="#61709A" points="1144.78,342.7 1147.68,327.1 1154.48,327.1 1151.58,342.7"/><polygon fill="#61709A" points="1156.26,342.7 1159.16,327.1 1165.96,327.1 1163.06,342.7"/><polygon fill="#61709A" points="1167.75,342.7 1170.65,327.1 1177.45,327.1 1174.55,342.7"/><polygon fill="#61709A" points="1179.24,342.7 1182.14,327.1 1188.94,327.1 1186.04,342.7"/><polygon fill="#61709A" points="1190.72,342.7 1193.62,327.1 1200.42,327.1 1197.52,342.7"/><polygon fill="#61709A" points="1202.21,342.7 1205.11,327.1 1211.91,327.1 1209.01,342.7"/><polygon fill="#61709A" points="1213.70,342.7 1216.60,327.1 1223.40,327.1 1220.50,342.7"/><polygon fill="#61709A" points="1225.18,342.7 1228.08,327.1 1234.88,327.1 1231.98,342.7"/><polygon fill="#61709A" points="1236.67,342.7 1239.57,327.1 1246.37,327.1 1243.47,342.7"/><polygon fill="#61709A" points="1248.16,342.7 1251.06,327.1 1257.86,327.1 1254.96,342.7"/><polygon fill="#61709A" points="1259.64,342.7 1262.54,327.1 1269.34,327.1 1266.44,342.7"/><polygon fill="#61709A" points="1271.13,342.7 1274.03,327.1 1280.83,327.1 1277.93,342.7"/><polygon fill="#61709A" points="1282.62,342.7 1285.52,327.1 1292.32,327.1 1289.42,342.7"/><polygon fill="#61709A" points="1294.10,342.7 1297.00,327.1 1303.80,327.1 1300.90,342.7"/><polygon fill="#61709A" points="1305.59,342.7 1308.49,327.1 1315.29,327.1 1312.39,342.7"/><polygon fill="#61709A" points="1317.08,342.7 1319.98,327.1 1326.78,327.1 1323.88,342.7"/><polygon fill="#61709A" points="1328.57,342.7 1331.47,327.1 1338.27,327.1 1335.37,342.7"/><polygon fill="#61709A" points="1340.05,342.7 1342.95,327.1 1349.75,327.1 1346.85,342.7"/><polygon fill="#61709A" points="1351.54,342.7 1354.44,327.1 1361.24,327.1 1358.34,342.7"/><polygon fill="#61709A" points="1363.03,342.7 1365.93,327.1 1372.73,327.1 1369.83,342.7"/><polygon fill="#61709A" points="1374.51,342.7 1377.41,327.1 1384.21,327.1 1381.31,342.7"/><polygon fill="#61709A" points="1386.00,342.7 1388.90,327.1 1395.70,327.1 1392.80,342.7"/></svg>
<div class="t" style="left:427.88px;top:554.00px;font-size:67.15px;line-height:67.15px;font-weight:bold;color:#002060;transform:scaleX(0.9238);">QUICK STYLES</div>
<div class="t" style="left:429.04px;top:641.00px;font-size:21.66px;line-height:21.66px;font-weight:normal;color:#404040;transform:scaleX(0.9793);">Themes and styles help to beautify your slides and makes it more presentable and visually</div>
<div class="t" style="left:428.14px;top:674.00px;font-size:21.95px;line-height:21.95px;font-weight:normal;color:#404040;transform:scaleX(0.9777);">appealing during slideshow presentations.</div>
<div class="t" style="left:1115.74px;top:399.00px;font-size:28.05px;line-height:28.05px;font-weight:bold;color:#000;transform:scaleX(1.1395);">More button</div>
<div class="a" style="left:51px;top:267px;width:207px;height:121px;border:4px solid #B7472A;background:#fff"></div>
<div class="a" style="left:56px;top:272px;width:197px;height:99px;background:linear-gradient(#FFFFFF 0%,#F5F5F6 35%,#E8E8EB 75%,#E0E0E4 100%)"></div>
<div class="a" style="left:56px;top:371px;width:197px;height:12px;background:linear-gradient(#555557,#767577 30%,#838283)"></div>
<div class="a" style="left:74px;top:282.4px;width:155px;height:2.2px;background:repeating-linear-gradient(90deg,rgba(98,112,154,.75) 0 1.2px,rgba(98,112,154,.4) 1.2px 1.85px)"></div>
<div class="t" style="left:75.52px;top:319.00px;font-size:10.90px;line-height:10.90px;font-weight:bold;color:#0A2466;transform:scaleX(0.9063);">QUICK STYLES</div>
<div class="t" style="left:75.50px;top:333.30px;font-size:3.78px;line-height:3.78px;font-weight:normal;color:#555;transform:scaleX(0.8950);">Themes and styles help to beautify your slides and makes it more presentable and visually</div>
<div class="t" style="left:75.50px;top:338.40px;font-size:3.78px;line-height:3.78px;font-weight:normal;color:#555;transform:scaleX(0.8992);">appealing during slideshow presentations.</div>
<div class="t" style="left:21.08px;top:266.00px;font-size:22.09px;line-height:22.09px;font-weight:normal;color:#B7472A;transform:scaleX(0.8386);">1</div>
<div class="t" style="left:11.58px;top:994.00px;font-size:16.42px;line-height:16.42px;font-weight:normal;color:#444;transform:scaleX(0.9473);">Slide 1 of 1</div>
<div class="t" style="left:164.64px;top:994.00px;font-size:17.01px;line-height:17.01px;font-weight:normal;color:#444;transform:scaleX(0.9171);">English (Nigeria)</div>
<div class="t" style="left:329.52px;top:994.00px;font-size:16.42px;line-height:16.42px;font-weight:normal;color:#444;transform:scaleX(0.9394);">Accessibility: Good to go</div>
<div class="t" style="left:1488.58px;top:995.00px;font-size:15.70px;line-height:15.70px;font-weight:normal;color:#444;transform:scaleX(1.0288);">65%</div>
<div class="a" style="left:1035px;top:986px;width:60px;height:32px;background:#D0D0D0"></div>
<svg style="left:0;top:0" width="1586" height="1020" fill="none" stroke="#3B3A39" stroke-width="1.6"><path d="M125.8,1010.2 H119.2 V993.6 H125.4 Q128,993.8 128.1,996.6 V1004.8"/><path d="M128.3,996.4 Q129,993.6 131,993.6 H137.3 V1002.2"/><polyline points="126.6,1007.4 131.3,1012 139,1004.2"/><circle cx="311.3" cy="994.9" r="2.4"/><path d="M307.4,1004.6 V999.8 L304,998.4 Q302.4,997.4 303.4,995.9 Q304.4,994.9 306,995.6 Q311.3,997.6 316.6,995.6 Q318.3,994.9 319.4,996 Q320.2,997.6 318.4,998.5 L315.3,999.7 V1003.8"/><path d="M307.4,1004.4 L306.2,1009.4 Q306,1012 308,1011.8 L309.6,1010.8"/><polyline points="312,1007.1 316.6,1011.7 324.4,1004.1"/><rect x="1055.3" y="994.1" width="19.2" height="15.8"/><line x1="1059.5" y1="994.1" x2="1059.5" y2="1009.9"/><line x1="1059.5" y1="1005.2" x2="1074.5" y2="1005.2"/><rect x="1064.4" y="998.4" width="5.8" height="2.4"/><rect x="1115.5" y="994.1" width="6.9" height="5.3"/><rect x="1127.5" y="994.1" width="6.9" height="5.3"/><rect x="1115.5" y="1004.5" width="6.9" height="5.3"/><rect x="1127.5" y="1004.5" width="6.9" height="5.3"/><path d="M1184.2,1009 V996 Q1183.4,992.5 1180,992.5 H1175.6 V1008.6 H1181.6 L1184.2,1010.4 L1186.8,1008.6 H1192.9 V992.5 H1188.4 Q1185,992.5 1184.2,996"/><line x1="1177.6" y1="996.4" x2="1181.8" y2="996.4" stroke-width="1.5"/><line x1="1186.6" y1="996.4" x2="1190.8" y2="996.4" stroke-width="1.5"/><line x1="1177.6" y1="999.6" x2="1181.8" y2="999.6" stroke-width="1.5"/><line x1="1186.6" y1="999.6" x2="1190.8" y2="999.6" stroke-width="1.5"/><line x1="1177.6" y1="1002.7" x2="1181.8" y2="1002.7" stroke-width="1.5"/><line x1="1186.6" y1="1002.7" x2="1190.8" y2="1002.7" stroke-width="1.5"/><line x1="1177.6" y1="1005.9" x2="1181.8" y2="1005.9" stroke-width="1.5"/><line x1="1186.6" y1="1005.9" x2="1190.8" y2="1005.9" stroke-width="1.5"/><line x1="1234.4" y1="992.3" x2="1253.9" y2="992.3"/><rect x="1237.4" y="992.3" width="14.2" height="10.4"/><line x1="1240.8" y1="996.8" x2="1247.6" y2="996.8" stroke-width="1.5"/><line x1="1244.5" y1="1002.7" x2="1244.5" y2="1010"/><line x1="1239" y1="1010.2" x2="1249.6" y2="1010.2"/><line x1="1282.8" y1="1001.6" x2="1294.5" y2="1001.6" stroke-width="1.2"/><line x1="1303" y1="1001.8" x2="1451" y2="1001.8" stroke-width="2"/><rect x="1346" y="993" width="8" height="17" fill="#3B3A39" stroke="none"/><line x1="1376.8" y1="997.6" x2="1376.8" y2="1006" stroke-width="1.6"/><line x1="1459" y1="1001.8" x2="1470.7" y2="1001.8" stroke-width="1.2"/><line x1="1464.85" y1="995.9" x2="1464.85" y2="1007.6" stroke-width="1.2"/><rect x="1545.2" y="997.3" width="8.3" height="8"/><polyline points="1545.8,994 1549.3,990.5 1552.8,994" stroke-width="1.5"/><polyline points="1545.8,1008.3 1549.3,1011.8 1552.8,1008.3" stroke-width="1.5"/><polyline points="1542.2,998.2 1538.8,1001.4 1542.2,1004.6" stroke-width="1.5"/><polyline points="1556.4,998.2 1559.8,1001.4 1556.4,1004.6" stroke-width="1.5"/></svg>
<svg style="left:0;top:0" width="1586" height="1020"><rect x="1202.2" y="218" width="3.4" height="174" fill="#000"/><polygon points="1203.9,198.4 1212.2,220.6 1203.9,217.4 1195.8,220.6" fill="#000"/></svg>
</body></html>
